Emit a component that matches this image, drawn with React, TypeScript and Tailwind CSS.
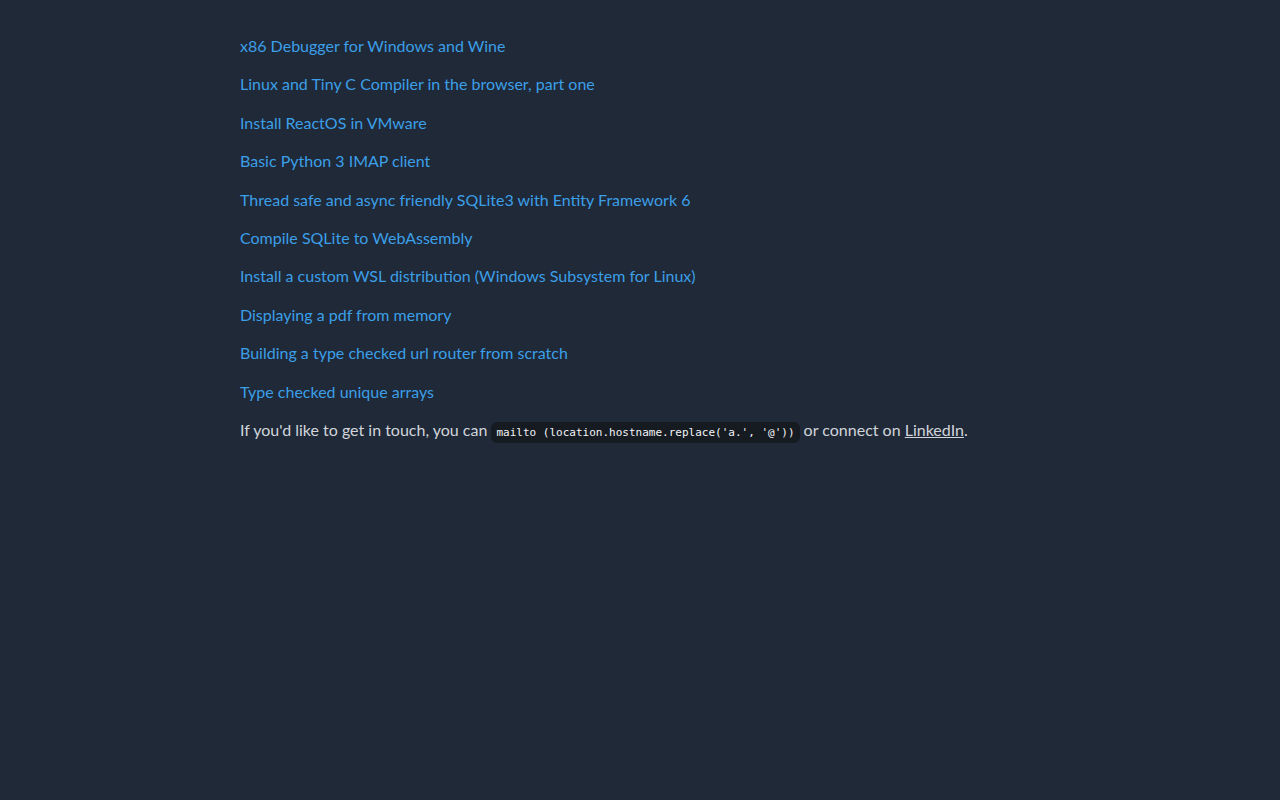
import React from 'react'

const posts = [
  'x86 Debugger for Windows and Wine',
  'Linux and Tiny C Compiler in the browser, part one',
  'Install ReactOS in VMware',
  'Basic Python 3 IMAP client',
  'Thread safe and async friendly SQLite3 with Entity Framework 6',
  'Compile SQLite to WebAssembly',
  'Install a custom WSL distribution (Windows Subsystem for Linux)',
  'Displaying a pdf from memory',
  'Building a type checked url router from scratch',
  'Type checked unique arrays',
]

const App = () => {
  return (
    <div className="min-h-screen bg-[#1f2937] text-[#d1d5db] font-['Lato',sans-serif] text-[16px] leading-[22.4px]">
      <div className="max-w-[800px] mx-auto pt-[19px]">
        {posts.map((title) => (
          <p key={title} className="my-4">
            <a href="#" className="text-[#3c9fe8]">
              {title}
            </a>
          </p>
        ))}
        <p className="my-4">
          If you'd like to get in touch, you can{' '}
          <code className="font-['DejaVu_Sans_Mono',monospace] text-[11px] bg-[#161b22] text-[#f3f4f6] rounded-md px-[5px] py-[4px]">
            mailto (location.hostname.replace('a.', '@'))
          </code>{' '}
          or connect on{' '}
          <a href="#" className="underline">
            LinkedIn
          </a>
          .
        </p>
      </div>
    </div>
  )
}

export default App
